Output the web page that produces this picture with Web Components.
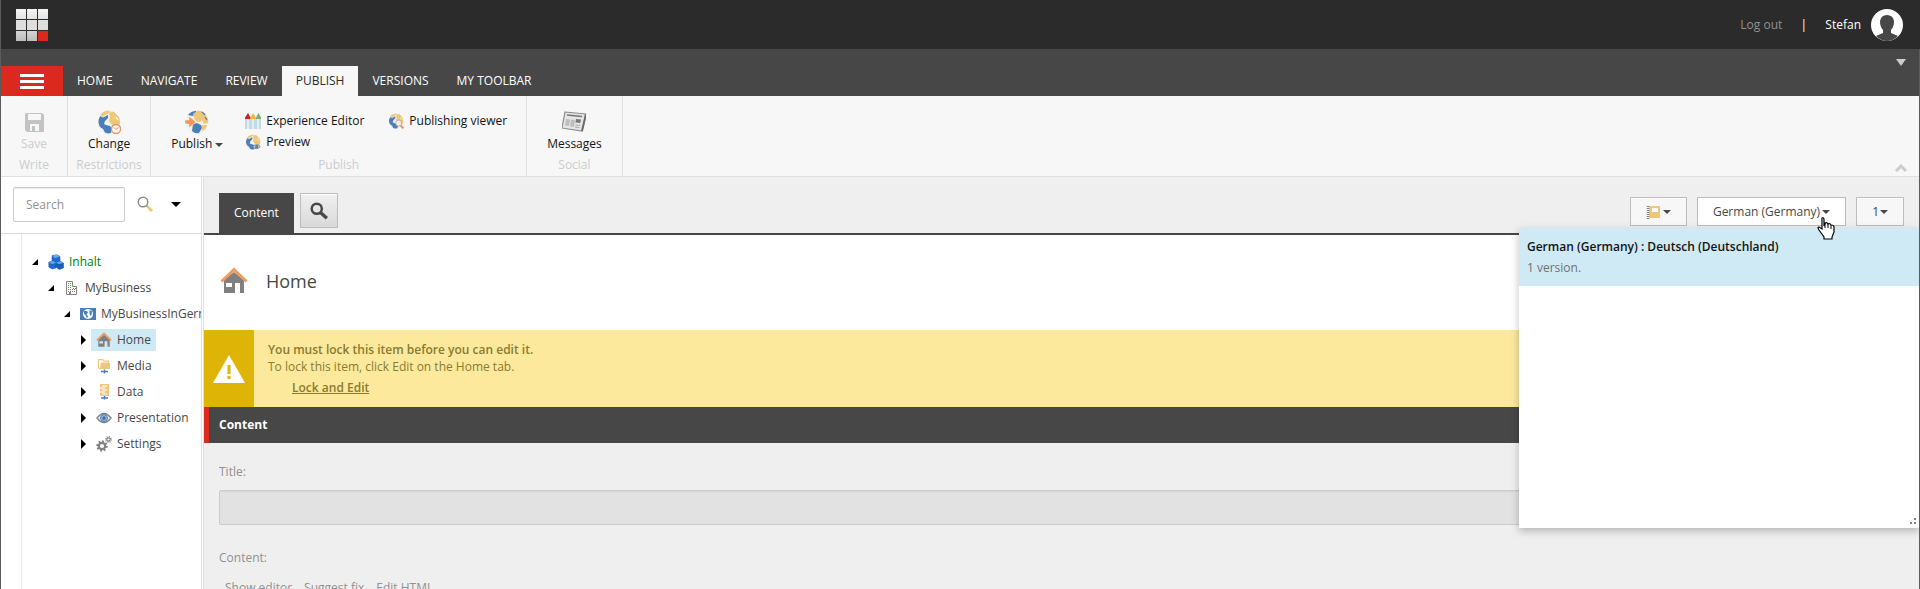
<!DOCTYPE html>
<html lang="en">
<head>
<meta charset="utf-8">
<title>Content Editor</title>
<style>
  html, body { margin: 0; height: 100%; }
  body { font: 12px/18px "Open Sans", "Noto Sans", sans-serif; color: #474747; overflow: hidden; }
</style>
</head>
<body>
<app-shell>
  <top-bar slot="top" user="Stefan"></top-bar>
  <ribbon-tabs slot="tabs" active="PUBLISH"></ribbon-tabs>
  <ribbon-strip slot="ribbon">
    <ribbon-group label="Write">
      <ribbon-button icon="save" label="Save" disabled></ribbon-button>
    </ribbon-group>
    <ribbon-group label="Restrictions">
      <ribbon-button icon="globe-clock" label="Change"></ribbon-button>
    </ribbon-group>
    <ribbon-group label="Publish">
      <ribbon-button icon="globe-arrow" label="Publish" menu></ribbon-button>
      <ribbon-stack>
        <ribbon-button small icon="crayons" label="Experience Editor"></ribbon-button>
        <ribbon-button small icon="globe-view" label="Preview"></ribbon-button>
      </ribbon-stack>
      <ribbon-stack>
        <ribbon-button small icon="globe-search" label="Publishing viewer"></ribbon-button>
      </ribbon-stack>
    </ribbon-group>
    <ribbon-group label="Social">
      <ribbon-button icon="news" label="Messages"></ribbon-button>
    </ribbon-group>
  </ribbon-strip>
  <content-tree slot="tree">
    <tree-node level="0" icon="cubes" label="Inhalt" open accent></tree-node>
    <tree-node level="1" icon="building" label="MyBusiness" open></tree-node>
    <tree-node level="2" icon="flag" label="MyBusinessInGermany" open></tree-node>
    <tree-node level="3" icon="home" label="Home" selected></tree-node>
    <tree-node level="3" icon="media" label="Media"></tree-node>
    <tree-node level="3" icon="data" label="Data"></tree-node>
    <tree-node level="3" icon="eye" label="Presentation"></tree-node>
    <tree-node level="3" icon="gears" label="Settings"></tree-node>
  </content-tree>
  <editor-pane slot="editor"></editor-pane>
</app-shell>

<script>
const globe = `<circle cx="12" cy="12" r="11.500" fill="#f0f1f2"/>
  <path d="M3.500 4.500Q7 .8 12 .6L13 2L9 5L7 5.500L5 7Z" fill="#efc77b"/>
  <path d="M3 6L6 7.500L9 6L11 5V8L8 11L7 14L9 15L13 16L15 19L14 23Q11 24 8 22.500L6 19L3 17Q0 12 3 6Z" fill="#4c7fb8"/>
  <path d="M14 1.500Q20 2 22 7Q24 12 22 16L19 20L17 19V16L14 14L12 11L13 7L12 4Z" fill="#efc77b"/>
  <path d="M1 9L2.500 4.500M18.500 2L22 6M19 7L21 10" stroke="#fff" stroke-width="1.200"/>`;
const icons = {
  save: [24, `<path fill="#c3c3c3" fill-rule="evenodd" d="M4 3H20L22 5V21Q22 22 21 22H5L3 20V4Q3 3 4 3ZM6 4V10H19V4ZM8 14V21H17V14ZM10 16H13V21H10Z"/>`],
  'globe-clock': [24, globe + `<circle cx="19" cy="19" r="4.500" fill="#f7f7f7" stroke="#e8935a" stroke-width="1.300"/><path d="M17 17.500L19 19.500L21.500 17.500" fill="none" stroke="#e8935a"/>`],
  'globe-arrow': [24, `<circle cx="12" cy="12" r="11.500" fill="#f0f1f2"/>
    <path d="M3 5Q6 1 11 .7L11 4L8 6L5 5.500Z" fill="#4c7fb8"/>
    <path d="M8 4L12 1Q18 0 21 5Q24 9 23 13L19 14L17 10L15 12L12 12L9 8Z" fill="#efc77b"/>
    <path d="M8 14L12 13L16 15L17 18L14 23Q10 24 7 21Z" fill="#4c7fb8"/><path d="M17 15L22 15Q21 20 17 21Z" fill="#efc77b"/>
    <path d="M17 2L20 5M20 7L22 10" stroke="#4c7fb8" stroke-width="1.200"/>
    <path d="M0 10H4V6L11 12L4 18V14H0Z" fill="#f1975a" stroke="#f7f7f7" stroke-width=".5"/>`],
  'globe-search': [24, globe + `<circle cx="16" cy="15" r="4.500" fill="#f3efef" stroke="#d9a892" stroke-width="1.500"/><path d="M19 19L23 23" stroke="#e8935a" stroke-width="3"/>`],
  'globe-view': [24, globe + `<path d="M12 19Q17 13 23 19Q17 25 12 19Z" fill="#d5d5d5" stroke="#808890" stroke-width="1.500"/><circle cx="17.500" cy="19" r="2.500" fill="#5f7f9c"/>`],
  crayons: [16, `<path d="M0 7V4.500L3 0L5.500 4.500V7Z" fill="#cd2027"/><path d="M5.500 7V5L8 0L11 5V7Z" fill="#f1b52c"/><path d="M11 7V4.500L13.500 0L16 4.500V7Z" fill="#76b36c"/><path d="M0 6H16V16H0Z" fill="#bfdbe7"/><path d="M3 6V16M8 6V16M13 6V16" stroke="#e4eff4" stroke-width="2"/>`],
  news: [24, `<path d="M3 2L24 4L20 21L0 18Z" fill="#e6e6e6" stroke="#8c8c8c" stroke-width="1.200"/><path d="M20 21L24 4" stroke="#6c6c6c" stroke-width="2"/><path d="M5 5L20 6.500" stroke="#777" stroke-width="1.600"/><path d="M4 9L8 9.400L7 16L3 15.500Z M9 9.500L13 10L12 17L8 16.300Z" fill="#bdbdbd"/><path d="M14 9L19 9.500L18.300 13L13.500 12.500Z" fill="#777"/><path d="M13.500 15L18 15.500M13 17L17.500 17.500" stroke="#a8a8a8"/>`],
  cubes: [16, `<g stroke="#1450a8" stroke-width=".5"><path d="M4 1.500L9 .8L12 2.500V8L7 9L4 7Z" fill="#1f6cd0"/><path d="M.8 8L5 7L8 9V14L4 15L.8 13Z" fill="#1f6cd0"/><path d="M8 9L12 7L15.500 9V14L11 15.500L8 13Z" fill="#195dbb"/></g><path d="M4 1.500L9 .8L12 2.500L7 4ZM.8 8L5 7L8 9L4 10ZM8 9L12 7L15.500 9L11 10Z" fill="#66aaf0"/>`],
  building: [16, `<path d="M2.500 14.500V1.500H8.500V6.500H12.500V14.500Z" fill="#fff" stroke="#858585"/><path d="M4 3.500H8M4 5.500H8M4 7.500H8M4 9.500H12M4 11.500H12M9 8.500H12" stroke="#4c7fb8" stroke-dasharray="1 1"/><path d="M5 12H7V15H5Z" fill="#858585"/>`],
  flag: [16, `<path d="M0 2H16V14H0Z" fill="#4c7fb8"/><circle cx="8" cy="8" r="5" fill="#fff"/><path d="M4 5L7 5L8 6.500L6.500 8.500L8 10L7 12.500L5.500 9L4 8ZM9.500 4L12 5.500L11.500 9L10.500 10L9.500 7.500Z" fill="#4c7fb8"/>`],
  home: [28, `<path d="M4 13L14 5L24 13V26H20V16H15V26H4ZM6 16V20H12V16Z" fill="#808080" fill-rule="evenodd"/><path d="M1.500 14.500L14 2.500L26.500 14.500" fill="none" stroke="#f09a5e" stroke-width="3"/>`],
  media: [16, `<path d="M2 1H7L8 2.500H13V5H14V11H3L2 10Z" fill="#efc77b"/><path d="M3 2.200H6.500L7.500 3.700H12V4.600H5L4 10H3Z" fill="#fff"/><path d="M8.500 11.500V15.500M5 13.500H12" stroke="#4c7fb8" stroke-width="1.500"/>`],
  data: [16, `<path d="M4 0H13V12H4Z" fill="#efc77b"/><path d="M4 4H9M4 8H9M6 2H11M6 6H11M6 10H11" stroke="#fff"/><path d="M8.500 12V15.500M5 14H12" stroke="#4c7fb8" stroke-width="1.500"/>`],
  eye: [16, `<path d="M1 8Q8 -1 15 8Q8 17 1 8Z" fill="#fff" stroke="#808080" stroke-width="1.300"/><circle cx="8" cy="8" r="3.500" fill="#8fb2d6" stroke="#4c7fb8"/><circle cx="8" cy="8" r="1.500" fill="#2d5f99"/>`],
  gears: [16, `<g fill="none" stroke="#808080"><circle cx="6" cy="10" r="3.200" stroke-width="2.200"/><circle cx="6" cy="10" r="4.800" stroke-width="1.800" stroke-dasharray="1.850 1.850"/><circle cx="12.500" cy="3.500" r="1.700" stroke-width="1.200"/><circle cx="12.500" cy="3.500" r="2.800" stroke-width="1.200" stroke-dasharray="1.100 1.100"/></g>`],
  lens: [16, `<circle cx="6" cy="6" r="4.800" fill="#fff" stroke="#8a8a8a" stroke-width="1.400"/><path d="M9.500 9.500L11 11" stroke="#8a8a8a" stroke-width="1.500"/><path d="M10.500 10.500L15 15" stroke="#efc77b" stroke-width="3"/>`],
  search: [16, `<circle cx="6" cy="6" r="4.500" fill="none" stroke="#474747" stroke-width="2.200"/><path d="M9.500 9.500L15 14.500" stroke="#474747" stroke-width="3"/>`],
  book: [14, `<path d="M3 1H14V13H3Z" fill="#efc77b"/><path d="M6 3H12V7H6Z" fill="#fff"/><path d="M2 1V14" stroke="#808080" stroke-width="2.500" stroke-dasharray="1 1"/>`],
  warning: [32, `<path d="M16 2L32 30H0Z" fill="#fff"/><path d="M14.500 12H17.500V21H14.500ZM14.500 23H17.500V26H14.500Z" fill="#deb407"/>`],
  avatar: [32, `<circle cx="16" cy="16" r="16" fill="#fff"/><path d="M16 6Q22 6 23 12Q23 18 20 21V24L27 27Q22 32 16 32Q10 32 5 27L12 24V21Q9 18 9 12Q10 6 16 6Z" fill="#474747"/>`],
  logo: [32, [0,1,2].map(r => [0,1,2].map(c => `<rect x="${c*11}" y="${r*11}" width="10" height="10" fill="${r==2&&c==2?'#dc291e':['url(#a)','#dedede','url(#b)'][r]}"/>`).join('')).join('') + `<defs><linearGradient id="a" x2="0" y2="1"><stop stop-color="#f4f4f4"/><stop offset="1" stop-color="#e2e2e2"/></linearGradient><linearGradient id="b" x2="0" y2="1"><stop stop-color="#d4d4d4"/><stop offset="1" stop-color="#bcbcbc"/></linearGradient></defs>`],
  pointer: [24, `<path d="M6 1Q8 0 8 3V9L9 6Q11 5 12 7Q14 6 15 8Q18 8 18 10V15L16 20V22H8V20L3 13Q1 10 3 10L6 12Z" fill="#fff" stroke="#000" stroke-width="1.200"/><path d="M9 6V11M12 7V11M15 8V12" stroke="#000"/>`]
};
const svg = (name, size) => {
  const [box, body] = icons[name];
  return `<svg class="icon" width="${size}" height="${size}" viewBox="0 0 ${box} ${box}" aria-hidden="true">${body}</svg>`;
};
const base = `:host,*{box-sizing:border-box} svg{display:block;flex:none} button{font:inherit;color:inherit;margin:0;padding:0;border:0;background:none;cursor:pointer} a{color:inherit}
  .caret{display:block;flex:none;width:0;height:0;border:4px solid transparent;border-top:4px solid #474747;border-bottom:0}`;
const define = (name, css, html) => customElements.define(name, class extends HTMLElement {
  connectedCallback() {
    if (this.shadowRoot) return;
    this.attachShadow({ mode: 'open' }).innerHTML = `<style>${base}${css}</style>${typeof html === 'function' ? html(this) : html}`;
  }
});

define('app-shell', `
  :host{display:grid;grid-template:auto auto auto minmax(0,1fr) / 203px minmax(0,1fr);height:100vh;background:#efefef;border-left:1px solid #5b5b5b}
  .wide{grid-column:1/-1}
  .framed{border-right:1px solid #5b5b5b}
  .cell{display:grid;min-width:0;min-height:0}`,
  `<div class="wide"><slot name="top"></slot></div>
   <div class="wide framed"><slot name="tabs"></slot></div>
   <div class="wide framed"><slot name="ribbon"></slot></div>
   <div class="cell"><slot name="tree"></slot></div>
   <div class="cell framed"><slot name="editor"></slot></div>`);

define('top-bar', `
  :host{display:block;background:#2b2b2b}
  header{display:flex;align-items:center;height:49px;padding:0 17px 0 15px;color:#fff}
  nav{display:flex;align-items:center;margin-left:auto}
  nav a{color:#919191;text-decoration:none}
  .bar{width:43px;text-align:center;line-height:16px}
  .who{margin-right:10px}`,
  el => `<header>${svg('logo', 32)}<nav aria-label="Account"><a href="#logout">Log out</a><span class="bar">|</span><span class="who">${el.getAttribute('user')}</span>${svg('avatar', 32)}</nav></header>`);

define('ribbon-tabs', `
  :host{display:block;background:#474747}
  nav{display:flex;align-items:flex-end;height:47px;color:#fff}
  button{height:30px;padding:0 14px}
  .active{background:#f7f7f7;color:#2b2b2b}
  .start{display:grid;align-content:center;gap:3px;width:62px;padding:0 19px;background:#dc291e}
  .start i{height:3px;background:#fff}
  .more{display:grid;place-items:center;align-self:flex-start;width:10px;height:10px;padding:0;margin:8px 13px 0 auto}
  .more .caret{border-width:7px 5px 0;border-top-color:#ccc}`,
  el => `<nav aria-label="Ribbon"><button class="start" aria-label="Menu"><i></i><i></i><i></i></button>${
    ['HOME','NAVIGATE','REVIEW','PUBLISH','VERSIONS','MY TOOLBAR'].map(t => `<button${t === el.getAttribute('active') ? ' class="active"' : ''}>${t}</button>`).join('')
  }<button class="more" aria-label="More"><i class="caret"></i></button></nav>`);

define('ribbon-strip', `
  :host{display:flex;height:81px;background:#f7f7f7;border-bottom:1px solid #e0e0e0}
  button{align-self:flex-end;margin:0 12px 4px auto}`,
  `<slot></slot><button aria-label="Collapse ribbon"><svg width="12" height="8" viewBox="0 0 12 8"><path d="M1 7L6 2L11 7" fill="none" stroke="#ccc" stroke-width="3"/></svg></button>`);

define('ribbon-group', `
  :host{display:flex;flex-direction:column;justify-content:space-between;padding:14px 8px 2px;border-right:1px solid #e0e0e0}
  .items{display:flex;justify-content:center}
  .label{text-align:center;color:#ccc}`,
  el => `<div class="items"><slot></slot></div><div class="label">${el.getAttribute('label')}</div>`);

define('ribbon-stack', `
  :host{display:flex;flex-direction:column;gap:3px;padding:2px 13px 0 0}
  :host(:last-of-type){padding-right:10px}`, `<slot></slot>`);

define('ribbon-button', `
  :host{display:block;color:#131313}
  :host([disabled]){color:#ccc}
  button{display:flex;flex-direction:column;align-items:center;gap:1px;padding:0 12px}
  span{display:flex;align-items:center;gap:3px}
  :host([small]) button{flex-direction:row;gap:5px;padding:0 1px 0 10px}
  .caret{margin-top:2px}`,
  el => `<button${el.hasAttribute('disabled') ? ' disabled' : ''}>${svg(el.getAttribute('icon'), el.hasAttribute('small') ? 16 : 24)}<span>${el.getAttribute('label')}${el.hasAttribute('menu') ? '<i class="caret"></i>' : ''}</span></button>`);

define('content-tree', `
  :host{display:grid;grid-template-rows:auto 1fr;background:#fff;border-right:1px solid #e0e0e0;min-width:0}
  .inner{display:grid;grid-template-rows:auto 1fr;border-right:1px solid #e0e0e0;margin-right:1px;min-width:0;grid-row:1/-1}
  form{display:flex;align-items:center;height:57px;padding:0 12px 2px;border-bottom:1px solid #d9d9d9}
  input{width:112px;height:35px;padding:0 12px;font:inherit;color:#474747;border:1px solid #ccc;border-radius:2px;outline:0;box-shadow:inset 0 1px 1px #eee}
  input::placeholder{color:#919191;opacity:1}
  .go{margin-left:12px}
  .opts{margin-left:18px}
  .opts .caret{border-width:5px 5px 0;border-top-color:#000}
  .nodes{margin-left:20px;padding-top:15px;border-left:1px solid #e8e8e8;overflow:hidden}`,
  `<div class="inner"><form role="search"><input type="text" placeholder="Search" aria-label="Search"><button type="button" class="go" aria-label="Search">${svg('lens', 16)}</button><button type="button" class="opts" aria-label="Search options"><i class="caret"></i></button></form>
   <div class="nodes" role="tree"><slot></slot></div></div>`);

define('tree-node', `
  :host{display:flex;align-items:center;height:26px;white-space:nowrap;padding-left:calc(10px + 16px * var(--level))}
  .arrow{width:7px;height:10px;margin-right:4px}
  a{display:flex;align-items:center;gap:5px;height:22px;padding:0 5px;text-decoration:none}
  :host([selected]) a{background:#d0eaf5}
  :host([accent]) a{color:#008000}`,
  el => {
    el.style.setProperty('--level', el.getAttribute('level'));
    const d = el.hasAttribute('open') ? 'M0 8L6 2V8Z' : 'M1 0L6 5L1 10Z';
    return `<svg class="arrow" viewBox="0 0 7 10"><path d="${d}"/></svg><a href="#item" role="treeitem">${svg(el.getAttribute('icon'), 16)}${el.getAttribute('label')}</a>`;
  });

define('language-menu', `
  :host{display:block;height:300px;background:#fff;box-shadow:0 3px 8px rgba(0,0,0,.25)}
  a{display:block;height:58px;padding:10px 8px;background:#d0eaf5;color:#707070;text-decoration:none}
  strong{display:block;font-weight:600;color:#131313;margin-bottom:3px}
  .grip{position:absolute;right:3px;bottom:4px}`,
  `<a href="#de"><strong>German (Germany) : Deutsch (Deutschland)</strong>1 version.</a>
   <svg class="grip" width="6" height="6" viewBox="0 0 6 6"><path d="M4 0H6V2H4ZM0 4H2V6H0ZM4 4H6V6H4Z" fill="#808080"/></svg>`);

define('editor-pane', `
  :host{display:block;position:relative;background:#efefef;overflow:hidden}
  .bar{display:flex;align-items:flex-start;height:58px;padding:16px 15px 0;border-bottom:2px solid #474747}
  .tab{height:40px;padding:0 15px;background:#474747;color:#fff}
  .find{display:grid;place-items:center;width:38px;height:35px;margin-left:6px;border:1px solid #bdbdbd;background:linear-gradient(#f0f0f0,#d9d9d9);box-shadow:inset 0 1px #fff}
  .tools{display:flex;gap:10px;margin:4px 0 0 auto}
  .tools button{display:flex;align-items:center;justify-content:center;gap:1px;height:29px;padding:0 15px;border:1px solid #bdbdbd;background:#f7f7f7;box-shadow:inset 0 1px #fff}
  .tools .book{gap:3px}
  .tools .lang{gap:2px;background:#fff}
  .head{display:flex;align-items:center;gap:18px;height:95px;padding:0 16px 3px;background:#fff}
  h1{margin:0;font-size:18px;line-height:24px;font-weight:400}
  .notice{display:grid;grid-template-columns:50px 1fr;height:77px;background:#fce99c;color:#897b2f}
  .sign{display:grid;place-items:center;background:#deb407}
  .notice div+div{padding:11px 14px 0;line-height:17px}
  strong,.notice a{display:block;font-weight:600}
  .notice a{margin:4px 24px 0}
  h2{margin:0;height:36px;padding:0 10px;border-left:5px solid #dc291e;background:#474747;color:#fff;font-size:12px;line-height:36px;font-weight:700}
  .fields{padding:20px 15px;color:#919191}
  label,.label{display:block}
  input{display:block;width:100%;height:35px;margin:9px 0 24px;border:1px solid #ccc;border-radius:2px;background:#e2e2e2;box-shadow:inset 0 1px 1px #d6d6d6}
  .links{display:flex;gap:12px;padding:12px 6px}
  .links a{text-decoration:none}
  language-menu{position:absolute;right:0;top:51px;width:400px}
  .pointer{position:absolute;right:79px;top:40px}`,
  `<div class="bar"><button class="tab">Content</button><button class="find" aria-label="Search">${svg('search', 18)}</button>
     <div class="tools"><button class="book" aria-label="Navigate">${svg('book', 14)}<i class="caret"></i></button><button class="lang" aria-haspopup="true">German (Germany)<i class="caret"></i></button><button>1<i class="caret"></i></button></div></div>
   <div class="head">${svg('home', 28)}<h1>Home</h1></div>
   <div class="notice"><div class="sign">${svg('warning', 32)}</div><div><strong>You must lock this item before you can edit it.</strong>To lock this item, click Edit on the Home tab.<a href="#lock">Lock and Edit</a></div></div>
   <h2>Content</h2>
   <div class="fields"><label for="title">Title:</label><input id="title" type="text" disabled>
     <div class="label">Content:</div><div class="links"><a href="#show">Show editor</a><a href="#fix">Suggest fix</a><a href="#html">Edit HTML</a></div></div>
   <language-menu></language-menu><div class="pointer">${svg('pointer', 24)}</div>`);
</script>
</body>
</html>
